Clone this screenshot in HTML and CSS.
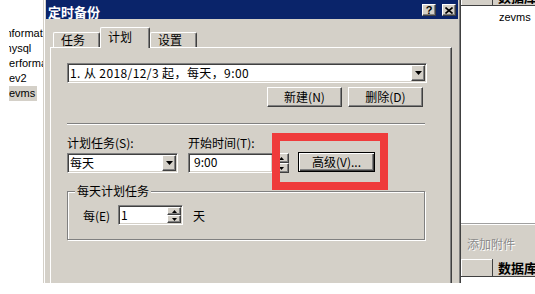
FILE: index.html
```html
<!DOCTYPE html>
<html lang="zh-CN">
<head>
    <meta charset="UTF-8">
    <meta name="viewport" content="width=device-width, initial-scale=1.0">
    <title>定时备份</title>
    <link rel="stylesheet" href="styles.css">
</head>
<body>
<div class="screen">
    <div class="db-list">
        <div class="db-item"><span class="cut-in">information_schema</span></div>
        <div class="db-item"><span class="cut-my">mysql</span></div>
        <div class="db-item"><span class="cut-pe">performance_schema</span></div>
        <div class="db-item"><span class="cut-z">zev2</span></div>
        <div class="db-item selected"><span class="cut-z">zevms</span></div>
    </div>

    <div class="dialog">
        <div class="titlebar">
            <span class="title">定时备份</span>
            <span class="cap-btn help">?</span>
            <span class="cap-btn close">
                <svg width="8" height="7" viewBox="0 0 8 7"><path d="M0.5 0.5L7.5 6.5M7.5 0.5L0.5 6.5" stroke="#000" stroke-width="1.6"/></svg>
            </span>
        </div>

        <div class="dlg-body">
            <div class="tabs">
                <div class="tab">任务</div>
                <div class="tab active">计划</div>
                <div class="tab">设置</div>
            </div>

            <div class="panel">
                <div class="combo wide">
                    <span class="combo-text schedule">1. 从 2018/12/3 起，每天，9:00</span>
                    <span class="drop-btn"><svg width="7" height="4" viewBox="0 0 7 4"><path d="M0 0H7L3.5 4Z"/></svg></span>
                </div>

                <div class="btn-row">
                    <button class="btn">新建(N)</button>
                    <button class="btn">删除(D)</button>
                </div>

                <div class="sep"></div>

                <div class="sched-grid">
                    <label>计划任务(S):</label>
                    <label>开始时间(T):</label>
                    <span></span>

                    <div class="combo type">
                        <span class="combo-text">每天</span>
                        <span class="drop-btn"><svg width="7" height="4" viewBox="0 0 7 4"><path d="M0 0H7L3.5 4Z"/></svg></span>
                    </div>
                    <div class="time-field">
                        <div class="edit">9:00</div>
                        <div class="spin">
                            <span class="spin-half"><svg width="5" height="3" viewBox="0 0 5 3"><path d="M0 3H5L2.5 0Z"/></svg></span>
                            <span class="spin-half"><svg width="5" height="3" viewBox="0 0 5 3"><path d="M0 0H5L2.5 3Z"/></svg></span>
                        </div>
                    </div>
                    <button class="btn default">高级(V)...</button>
                </div>

                <fieldset class="group">
                    <legend>每天计划任务</legend>
                    <div class="every-row">
                        <span class="every-label">每(E)</span>
                        <div class="edit num">
                            <span class="num-text">1</span>
                            <div class="spin small">
                                <span class="spin-half"><svg width="5" height="3" viewBox="0 0 5 3"><path d="M0 3H5L2.5 0Z"/></svg></span>
                                <span class="spin-half"><svg width="5" height="3" viewBox="0 0 5 3"><path d="M0 0H5L2.5 3Z"/></svg></span>
                            </div>
                        </div>
                        <span class="unit">天</span>
                    </div>
                </fieldset>

                <div class="highlight"></div>
            </div>
        </div>
    </div>

    <div class="side">
        <div class="grid-head top">
            <div class="gh-blank"></div>
            <div class="gh-cell">数据库</div>
        </div>
        <div class="side-row">zevms</div>
        <div class="side-fill"></div>
        <div class="toolbar">添加附件</div>
        <div class="grid-head">
            <div class="gh-blank"></div>
            <div class="gh-cell">数据库</div>
        </div>
        <div class="side-bottom"></div>
    </div>
</div>
</body>
</html>
```

FILE: styles.css
```css
* {
    box-sizing: border-box;
}
body {
    margin: 0;
    width: 535px;
    height: 294px;
    overflow: hidden;
    background: #ffffff;
    font-family: "Noto Sans CJK SC", sans-serif;
    font-size: 12px;
    color: #000000;
}
.screen {
    display: flex;
    height: 283px;
    overflow: hidden;
}

/* database list behind the dialog */
.db-list {
    width: 43px;
    flex: none;
    padding: 26px 0 0 9px;
    font-family: "Liberation Sans", Arial, sans-serif;
    font-size: 11px;
}
.db-item {
    height: 15px;
    line-height: 15px;
    overflow: hidden;
    white-space: nowrap;
}
.db-item span {
    display: inline-block;
}
.db-item.selected {
    width: 28px;
    background: #d4d0c8;
}
.cut-in { margin-left: -6px; }
.cut-my { margin-left: -6.5px; }
.cut-pe { margin-left: -6px; }
.cut-z { margin-left: -5.5px; }

/* dialog window */
.dialog {
    width: 418px;
    height: 300px;
    flex: none;
    margin-top: -3px;
    display: flex;
    flex-direction: column;
    padding: 2px;
    background: #d4d0c8;
    border: 1px solid;
    border-color: #d4d0c8 #404040 #404040 #d4d0c8;
    box-shadow: inset 1px 1px 0 #ffffff, inset -1px -1px 0 #808080;
}
.titlebar {
    height: 19px;
    flex: none;
    display: flex;
    align-items: flex-start;
    padding: 0 2px;
    background: #0a246a;
}
.title {
    margin-top: 5px;
    line-height: 14px;
    font-size: 13px;
    font-weight: bold;
    color: #ffffff;
}
.cap-btn {
    width: 14px;
    height: 12px;
    margin-top: 4px;
    display: flex;
    align-items: center;
    justify-content: center;
    background: #d4d0c8;
    border: 1px solid;
    border-color: #ffffff #404040 #404040 #ffffff;
    box-shadow: inset -1px -1px 0 #808080;
}
.help {
    margin-left: auto;
    font-family: "Liberation Sans", Arial, sans-serif;
    font-weight: bold;
    font-size: 11px;
    line-height: 10px;
}
.close {
    margin-left: 6px;
}
.dlg-body {
    flex: 1;
    display: flex;
    flex-direction: column;
    padding: 8px 6px 0 4px;
}

/* tabs */
.tabs {
    height: 20px;
    flex: none;
    display: flex;
    align-items: flex-end;
    padding-left: 3px;
    position: relative;
    z-index: 2;
}
.tab {
    width: 47px;
    height: 15px;
    padding-left: 7px;
    line-height: 14px;
    background: #d4d0c8;
    border-top: 1px solid #ffffff;
    border-left: 1px solid #ffffff;
    border-right: 1px solid #404040;
    border-radius: 2px 2px 0 0;
    box-shadow: inset -1px 0 0 #808080;
}
.tab.active {
    width: 50px;
    height: 21px;
    margin-bottom: -1px;
    padding-top: 2px;
}
.panel {
    flex: 1;
    position: relative;
    padding: 15px 0 0 16px;
    background: #d4d0c8;
    border-top: 1px solid #ffffff;
    border-left: 1px solid #ffffff;
    border-right: 1px solid #404040;
    box-shadow: inset -1px 0 0 #808080;
}

/* controls */
.combo,
.edit {
    height: 20px;
    background: #ffffff;
    border: 1px solid;
    border-color: #808080 #ffffff #ffffff #808080;
    box-shadow: inset 1px 1px 0 #404040, inset -1px -1px 0 #d4d0c8;
}
.combo {
    display: flex;
    align-items: center;
}
.combo.wide {
    width: 360px;
}
.combo.type {
    width: 111px;
}
.combo-text {
    flex: 1;
    padding-left: 2px;
    line-height: 16px;
    white-space: nowrap;
}
.combo-text.schedule {
    letter-spacing: 0.4px;
}
.drop-btn,
.spin-half {
    display: flex;
    align-items: center;
    justify-content: center;
    background: #d4d0c8;
    border: 1px solid;
    border-color: #ffffff #404040 #404040 #ffffff;
    box-shadow: inset -1px -1px 0 #808080;
}
.drop-btn {
    width: 14px;
    height: 16px;
    margin-right: 1px;
}
.btn-row {
    width: 356px;
    margin-top: 4px;
    display: flex;
    justify-content: flex-end;
    gap: 6px;
}
.btn {
    width: 75px;
    height: 20px;
    padding: 0;
    font-family: "Noto Sans CJK SC", sans-serif;
    font-size: 12px;
    line-height: 16px;
    color: #000000;
    background: #d4d0c8;
    border: 1px solid;
    border-color: #ffffff #404040 #404040 #ffffff;
    box-shadow: inset -1px -1px 0 #808080;
}
.btn.default {
    width: 77px;
    margin-top: -1px;
    border-color: #000000;
    box-shadow: inset 1px 1px 0 #ffffff, inset -1px -1px 0 #404040, inset -2px -2px 0 #808080;
}
.sep {
    width: 358px;
    height: 2px;
    margin-top: 16px;
    border-top: 1px solid #808080;
    border-bottom: 1px solid #ffffff;
}
.sched-grid {
    margin-top: 10px;
    display: grid;
    grid-template-columns: 121px 110px 77px;
    row-gap: 2px;
}
.sched-grid label {
    line-height: 16px;
}
.time-field {
    width: 101px;
    display: flex;
}
.time-field .edit {
    width: 85px;
    padding-left: 5px;
    line-height: 16px;
}
.spin {
    width: 16px;
    height: 20px;
    display: flex;
    flex-direction: column;
}
.spin-half {
    flex: 1;
}
.spin.small {
    width: 14px;
    height: 16px;
    margin-left: auto;
    margin-right: 1px;
}

/* group box */
.group {
    width: 358px;
    margin: 11px 0 0 0;
    padding: 7px 0 14px 0;
    min-inline-size: 0;
    border: 1px solid #808080;
    box-shadow: inset 1px 1px 0 #ffffff, 1px 1px 0 #ffffff;
}
.group legend {
    margin-left: 7px;
    padding: 0 2px;
    line-height: 14px;
    background: #d4d0c8;
}
.every-row {
    height: 20px;
    display: flex;
    align-items: center;
    padding-left: 15px;
}
.every-label {
    width: 35px;
}
.edit.num {
    width: 65px;
    display: flex;
    align-items: center;
    padding-left: 2px;
}
.num-text {
    line-height: 16px;
}
.unit {
    margin-left: 10px;
}

/* red marker drawn over the screenshot */
.highlight {
    position: absolute;
    left: 221px;
    top: 85px;
    width: 116px;
    height: 57px;
    border: 8px solid #ef3b3b;
    z-index: 3;
}

/* main window to the right */
.side {
    width: 74px;
    flex: none;
    display: flex;
    flex-direction: column;
    font-family: "Liberation Sans", Arial, sans-serif;
    font-size: 11px;
}
.grid-head {
    height: 18px;
    flex: none;
    display: flex;
    border-bottom: 1px solid #404040;
}
.grid-head.top {
    margin-top: -12px;
}
.gh-blank {
    width: 32px;
    background: #d4d0c8;
    border-right: 1px solid #404040;
    box-shadow: inset 1px 1px 0 #ffffff;
}
.gh-cell {
    flex: 1;
    padding-left: 5px;
    background: #d4d0c8;
    font-family: "Noto Sans CJK SC", sans-serif;
    font-size: 13px;
    font-weight: bold;
    line-height: 17px;
    white-space: nowrap;
    overflow: hidden;
}
.side-row {
    margin-top: 4px;
    padding-left: 38px;
    line-height: 14px;
}
.side-fill {
    flex: 1;
}
.toolbar {
    height: 36px;
    flex: none;
    padding: 13px 0 0 6px;
    background: #d4d0c8;
    border-top: 1px solid #a0a0a0;
    box-shadow: inset 0 1px 0 #ffffff;
    font-family: "Noto Sans CJK SC", sans-serif;
    font-size: 12px;
    line-height: 14px;
    color: #8c8c8c;
    text-shadow: 1px 1px 0 #ffffff;
    white-space: nowrap;
}
.side-bottom {
    height: 6px;
    flex: none;
}
```
